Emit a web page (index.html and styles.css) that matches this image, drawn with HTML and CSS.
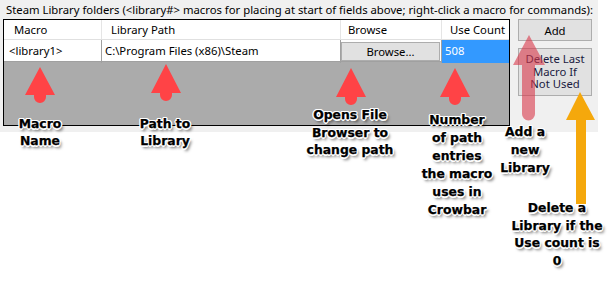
FILE: index.html
```html
<!DOCTYPE html>
<html lang="en">
<head>
  <meta charset="UTF-8" />
  <title>Steam Library folders</title>
  <link rel="stylesheet" href="styles.css">
</head>
<body>
  <!-- Dialog part -->
  <div class="dialog">
    <p class="caption">Steam Library folders (&lt;library#&gt; macros for placing at start of fields above; right-click a macro for commands):</p>
    <div class="dialog-body">
      <div class="grid">
        <div class="row head">
          <div class="cell c-macro">Macro</div>
          <div class="cell c-path">Library Path</div>
          <div class="cell c-browse">Browse</div>
          <div class="cell c-count">Use Count</div>
        </div>
        <div class="row data">
          <div class="cell c-macro">&lt;library1&gt;</div>
          <div class="cell c-path">C:\Program Files (x86)\Steam</div>
          <div class="cell c-browse"><button class="browse-btn">Browse...</button></div>
          <div class="cell c-count selected">508</div>
        </div>
        <div class="empty"></div>
      </div>
      <div class="side">
        <button class="btn">Add</button>
        <button class="btn tall"><span>Delete Last</span><span>Macro If</span><span>Not Used</span></button>
      </div>
    </div>
  </div>

  <!-- Annotations -->
  <svg class="arrows" width="615" height="302" viewBox="0 0 615 302">
    <g fill="#ff4346">
      <path d="M40 67 L55 95 L46 95 L46 97 A6 6 0 0 1 34 97 L34 95 L25 95 Z"/>
      <path d="M166 64 L181 93 L172 93 L172 95 A6 6 0 0 1 160 95 L160 93 L151 93 Z"/>
      <path d="M351 68 L366 97 L357 97 L357 99 A6 6 0 0 1 345 99 L345 97 L336 97 Z"/>
      <path d="M455 68 L470 97 L461 97 L461 99 A6 6 0 0 1 449 99 L449 97 L440 97 Z"/>
    </g>
    <path fill="#d9374a" fill-opacity="0.6" d="M529 35 L545 65 L535 65 L535 114 A6.5 6.5 0 0 1 522 114 L522 65 L513 65 Z"/>
    <path fill="#f5a80c" d="M580 92 L595 120 L586 120 L586 204 L576 204 L576 120 L566 120 Z"/>
  </svg>

  <div class="note note-macro">Macro<br>Name</div>
  <div class="note note-path">Path to<br>Library</div>
  <div class="note note-browse">Opens File<br>Browser to<br>change path</div>
  <div class="note note-count">Number<br>of path<br>entries<br>the macro<br>uses in<br>Crowbar</div>
  <div class="note note-add">Add a<br>new<br>Library</div>
  <div class="note note-delete">Delete a<br>Library if the<br>Use count is<br>0</div>
</body>
</html>
```

FILE: styles.css
```css
* {
  margin: 0;
  padding: 0;
  box-sizing: border-box;
}
html, body {
  width: 615px;
  height: 302px;
  background: #fff;
  overflow: hidden;
}
body {
  position: relative;
  font-family: 'Noto Sans', sans-serif;
  font-size: 11.3px;
  color: #000;
}
.dialog {
  width: 598px;
  height: 132px;
  background: #f0f0f0;
  padding: 2px 0 0 3px;
}
.caption {
  margin-left: 3px;
  height: 17px;
  line-height: 15px;
  white-space: nowrap;
}
.dialog-body {
  display: flex;
  align-items: flex-start;
}
.grid {
  width: 507px;
  height: 107px;
  border: 1px solid #000;
  background: #ababab;
  display: flex;
  flex-direction: column;
}
.row {
  display: grid;
  grid-template-columns: 98px 239px 101px 1fr;
  background: #fff;
}
.head {
  height: 20px;
  border-bottom: 1px solid #e0e0e0;
}
.head .cell {
  border-right: 1px solid #e5e5e5;
  line-height: 19px;
}
.head .c-macro {
  padding-left: 10px;
}
.head .c-path {
  padding-left: 9px;
}
.head .c-browse {
  padding-left: 7px;
}
.head .c-count {
  padding-left: 8px;
  border-right: none;
}
.data {
  height: 22px;
  border-bottom: 1px solid #a0a0a0;
}
.data .cell {
  border-right: 1px solid #a0a0a0;
  line-height: 21px;
  white-space: nowrap;
}
.data .c-macro {
  padding-left: 5px;
}
.data .c-path {
  padding-left: 3px;
}
.data .c-browse {
  padding: 1px 1px 1px 0;
}
.data .c-count {
  border-right: none;
}
.selected {
  background: #3399ff;
  color: #fff;
  padding-left: 3px;
}
.browse-btn {
  width: 100%;
  height: 19px;
  border: 1px solid #adadad;
  background: #e1e1e1;
  font-family: 'Noto Sans', sans-serif;
  font-size: 11.3px;
  color: #000;
}
.empty {
  flex: 1;
}
.side {
  margin-left: 8px;
  width: 74px;
  display: flex;
  flex-direction: column;
  gap: 7px;
}
.btn {
  height: 22px;
  border: 1px solid #adadad;
  background: #e1e1e1;
  font-family: 'Noto Sans', sans-serif;
  font-size: 11.3px;
  line-height: 13px;
  color: #000;
}
.btn.tall {
  height: 48px;
  color: #1a1a40;
  display: flex;
  flex-direction: column;
  align-items: center;
  justify-content: center;
}
.btn.tall span {
  display: block;
  height: 12.5px;
  line-height: 12.5px;
}
.arrows {
  position: absolute;
  left: 0;
  top: 0;
}
.note {
  position: absolute;
  width: 120px;
  text-align: center;
  font-family: 'DejaVu Sans', sans-serif;
  font-weight: bold;
  font-size: 12.4px;
  line-height: 17px;
  color: #000;
  white-space: nowrap;
  -webkit-text-stroke: 0.25px #000;
  text-shadow: -1px -1px 0 #fff, 1px -1px 0 #fff, -1px 1px 0 #fff, 1px 1px 0 #fff,
    0 -1.5px 0 #fff, 0 1.5px 0 #fff, -1.5px 0 0 #fff, 1.5px 0 0 #fff,
    2px 3px 3px rgba(0, 0, 0, 0.6);
}
.note-macro {
  left: -20px;
  top: 115px;
}
.note-path {
  left: 105px;
  top: 115px;
}
.note-browse {
  left: 290px;
  top: 106px;
  line-height: 17.5px;
}
.note-count {
  left: 397px;
  top: 111px;
  line-height: 18px;
}
.note-add {
  left: 465px;
  top: 123px;
  line-height: 18px;
}
.note-delete {
  left: 497px;
  top: 199px;
  line-height: 17.5px;
}
```
